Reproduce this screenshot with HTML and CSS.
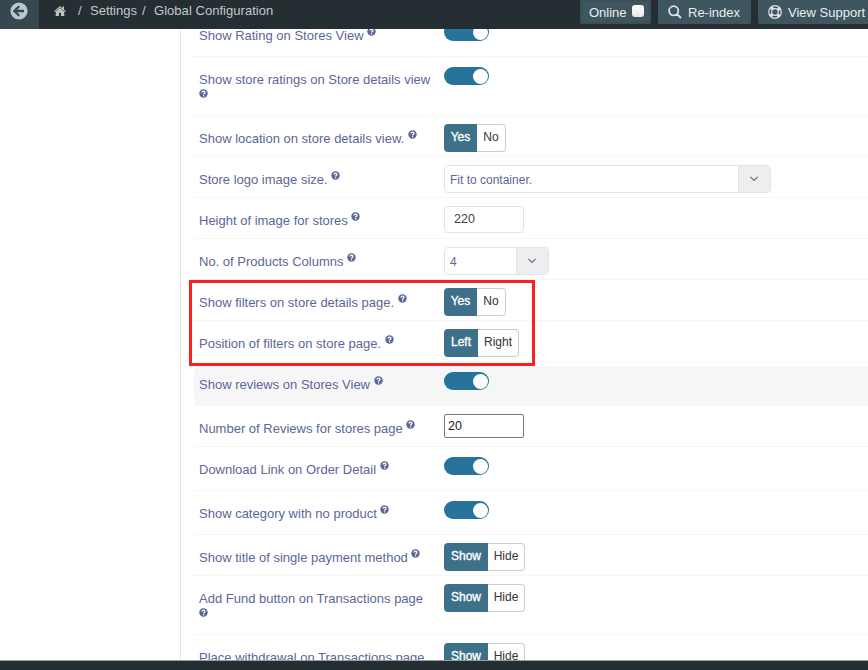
FILE: index.html
```html
<!DOCTYPE html>
<html lang="en">
<head>
<meta charset="utf-8">
<title>Global Configuration</title>
<link rel="stylesheet" href="styles.css">
</head>
<body>
<svg class="defs" aria-hidden="true">
  <symbol id="help" viewBox="0 0 9 9"><circle cx="4.5" cy="4.5" r="4.2" fill="#5d6698"/><path d="M3 3.5C3 1.7 6.1 1.8 6 3.5C6 4.5 4.6 4.3 4.6 5.4M4.6 6.2V7.4" fill="none" stroke="#fff" stroke-width="1.25"/></symbol>
  <symbol id="chevron" viewBox="0 0 10 6"><path d="M1.4 .8L5 4.4L8.6 .8" fill="none" stroke="#5d6b98" stroke-width="1.2"/></symbol>
</svg>
<div class="app">
  <header class="topbar">
    <a class="back"><svg width="18" height="18" viewBox="0 0 18 18"><circle cx="9" cy="9" r="8.6" fill="#b9c8cf"/><path d="M14 9H5M9.2 4.2L4.4 9L9.2 13.8" fill="none" stroke="#37474f" stroke-width="2.3"/></svg></a>
    <nav class="crumbs">
      <svg class="home" width="12" height="10" viewBox="0 0 12 10"><path d="M6 0L8.5 2.2V.6H10V3.5L12 5.3L11.3 6L6 1.5L.7 6L0 5.3Z"/><path d="M6 2.1L10.3 5.8V10H7V6.8H5V10H1.7V5.8Z"/></svg>
      <span class="slash first">/</span><span class="crumb settings">Settings</span><span class="slash">/</span><span class="crumb current">Global Configuration</span>
    </nav>
    <div class="actions">
      <a class="action online">Online<i class="status"></i></a>
      <a class="action reindex"><svg width="14" height="14" viewBox="0 0 14 14"><path d="M9 9L13 13M10.3 5.8A4.6 4.6 0 1 1 1.1 5.8A4.6 4.6 0 1 1 10.3 5.8Z" fill="none" stroke="#dce3e6" stroke-width="1.8"/></svg>Re-index</a>
      <a class="action support"><svg width="14" height="14" viewBox="0 0 14 14"><g fill="none" stroke="#dce3e6"><circle cx="7" cy="7" r="6.3" stroke-width="1.2"/><circle cx="7" cy="7" r="3.3" stroke-width="1.2"/><circle cx="7" cy="7" r="4.9" stroke-width="2.7" stroke-dasharray="3 4.7" stroke-dashoffset="5.35"/></g></svg>View Support</a>
    </div>
  </header>
  <main class="page">
    <aside class="side"></aside>
    <section class="settings-list">
      <div class="row tall"><div class="label"><span class="t">Show Rating on Stores View</span> <svg class="help"><use href="#help"/></svg></div><div class="toggle"></div></div>
      <div class="row wrapped"><div class="label"><span class="t">Show store ratings on Store details view</span> <svg class="help"><use href="#help"/></svg></div><div class="toggle"></div></div>
      <div class="row"><div class="label"><span class="t">Show location on store details view.</span> <svg class="help"><use href="#help"/></svg></div><div class="switch"><b>Yes</b><span>No</span></div></div>
      <div class="row"><div class="label"><span class="t">Store logo image size.</span> <svg class="help"><use href="#help"/></svg></div><div class="select wide"><span>Fit to container.</span><i><svg class="chevron"><use href="#chevron"/></svg></i></div></div>
      <div class="row"><div class="label"><span class="t">Height of image for stores</span> <svg class="help"><use href="#help"/></svg></div><div class="field">220</div></div>
      <div class="row"><div class="label"><span class="t">No. of Products Columns</span> <svg class="help"><use href="#help"/></svg></div><div class="select narrow"><span>4</span><i><svg class="chevron"><use href="#chevron"/></svg></i></div></div>
      <div class="row"><div class="label"><span class="t">Show filters on store details page.</span> <svg class="help"><use href="#help"/></svg></div><div class="switch"><b>Yes</b><span>No</span></div></div>
      <div class="row"><div class="label"><span class="t">Position of filters on store page.</span> <svg class="help"><use href="#help"/></svg></div><div class="switch sides"><b>Left</b><span>Right</span></div></div>
      <div class="row tall hovered"><div class="label"><span class="t">Show reviews on Stores View</span> <svg class="help"><use href="#help"/></svg></div><div class="toggle"></div></div>
      <div class="row"><div class="label"><span class="t">Number of Reviews for stores page</span> <svg class="help"><use href="#help"/></svg></div><div class="field plain">20</div></div>
      <div class="row tall"><div class="label"><span class="t">Download Link on Order Detail</span> <svg class="help"><use href="#help"/></svg></div><div class="toggle"></div></div>
      <div class="row tall"><div class="label"><span class="t">Show category with no product</span> <svg class="help"><use href="#help"/></svg></div><div class="toggle"></div></div>
      <div class="row"><div class="label"><span class="t">Show title of single payment method</span> <svg class="help"><use href="#help"/></svg></div><div class="switch show"><b>Show</b><span>Hide</span></div></div>
      <div class="row wrapped"><div class="label"><span class="t">Add Fund button on Transactions page</span> <svg class="help"><use href="#help"/></svg></div><div class="switch show"><b>Show</b><span>Hide</span></div></div>
      <div class="row wrapped"><div class="label"><span class="t">Place withdrawal on Transactions page</span> <svg class="help"><use href="#help"/></svg></div><div class="switch show"><b>Show</b><span>Hide</span></div></div>
    </section>
    <div class="callout"></div>
  </main>
  <footer class="bottombar"></footer>
</div>
</body>
</html>
```
FILE: styles.css
```css
* { box-sizing: border-box; }
body { margin: 0; background: #fff; font-family: "Liberation Sans", Arial, sans-serif; font-size: 13px; }
.defs { position: absolute; width: 0; height: 0; }
.app { display: flex; flex-direction: column; height: 670px; overflow: hidden; }

.topbar { display: flex; flex: none; height: 29px; background: #242e33; overflow: hidden; }
.back { width: 39px; background: #37474f; padding: 2px 0 0 10px; }
.back svg { display: block; }
.crumbs { display: flex; flex: 1; height: 22px; line-height: 22px; color: #c3c8ca; padding-left: 15px; white-space: nowrap; }
.home { margin: 6px 0 0; fill: #c3c3c0; }
.slash { width: 12px; }
.slash.first { margin-left: 12px; }
.settings { width: 52px; }
.current { letter-spacing: .04px; }
.actions { display: flex; flex: none; gap: 7px; width: 288px; }
.action { display: flex; flex: none; align-items: center; height: 24px; background: #3f5560; color: #e9eef0; border-radius: 0 0 2px 2px; white-space: nowrap; }
.online { width: 71px; padding-left: 9px; box-shadow: inset 0 0 3px #2f424c; }
.status { width: 12px; height: 12px; margin: -2px 0 0 5px; border-radius: 3px; background: linear-gradient(#fff, #e8e8e8); }
.reindex { width: 93px; padding-left: 10px; gap: 6px; }
.support { width: 120px; padding-left: 10px; gap: 6px; }

.page { display: flex; flex: 1; min-height: 0; overflow: hidden; position: relative; }
.side { flex: none; width: 181px; border-right: 1px solid #e6e6e6; }
.settings-list { flex: 1; padding-left: 13px; margin-top: -16px; }
.row { display: flex; height: 41px; border-bottom: 1px solid #f6f6f6; padding-left: 5px; }
.row.tall { height: 44px; }
.row.wrapped { height: 59px; }
.row.hovered { height: 40px; margin-top: 4px; background: #f6f6f6; border-radius: 4px 0 0 4px; }
.hovered .label { padding-top: 10px; }
.hovered .toggle { margin-top: 6px; }
.label { flex: none; width: 245px; padding: 14px 10px 0 0; line-height: 18px; color: #5d6698; }
.help { width: 9px; height: 9px; vertical-align: 4px; }

.toggle { width: 45px; height: 18px; margin-top: 10px; padding: 1.5px 1px 0 29px; border-radius: 9px; background: #27739a; }
.toggle::after { content: ""; display: block; width: 15px; height: 15px; border-radius: 50%; background: #fff; }
.switch { display: flex; width: 62px; height: 28px; margin-top: 8px; font-size: 12px; line-height: 26px; text-align: center; color: #333; }
.switch b { width: 33px; border-radius: 4px 0 0 4px; background: #3d7189; color: #fff; font-weight: normal; -webkit-text-stroke: .35px #fff; }
.switch span { flex: 1; border: 1px solid #ccc; border-left: 0; border-radius: 0 4px 4px 0; line-height: 24px; }
.sides { width: 75px; }
.sides b { width: 34px; }
.show { width: 81px; }
.show b { width: 44px; }
.field { width: 80px; height: 27px; margin-top: 8px; border: 1px solid #e2e2ec; border-radius: 4px; padding-left: 9px; font-size: 12.5px; line-height: 24px; color: #444; }
.plain { height: 24px; border-color: #767676; border-radius: 2px; padding-left: 3px; line-height: 22px; color: #222; }
.select { display: flex; height: 28px; margin-top: 8px; border: 1px solid #e2e2ec; border-radius: 4px; overflow: hidden; font-size: 12px; line-height: 28px; color: #5d6698; }
.select span { flex: 1; padding-left: 5px; }
.select i { display: flex; align-items: center; justify-content: center; width: 32px; padding-right: 1px; background: #eee; border-left: 1px solid #e2e2ec; }
.wide { width: 327px; }
.narrow { width: 105px; }
.chevron { width: 10px; height: 6px; }

.callout { position: absolute; left: 189px; top: 251px; width: 346px; height: 86px; border: 3px solid #fc1f1f; }
.bottombar { flex: none; height: 10px; background: #242e33; border-top: 1px solid #999da0; }
```
